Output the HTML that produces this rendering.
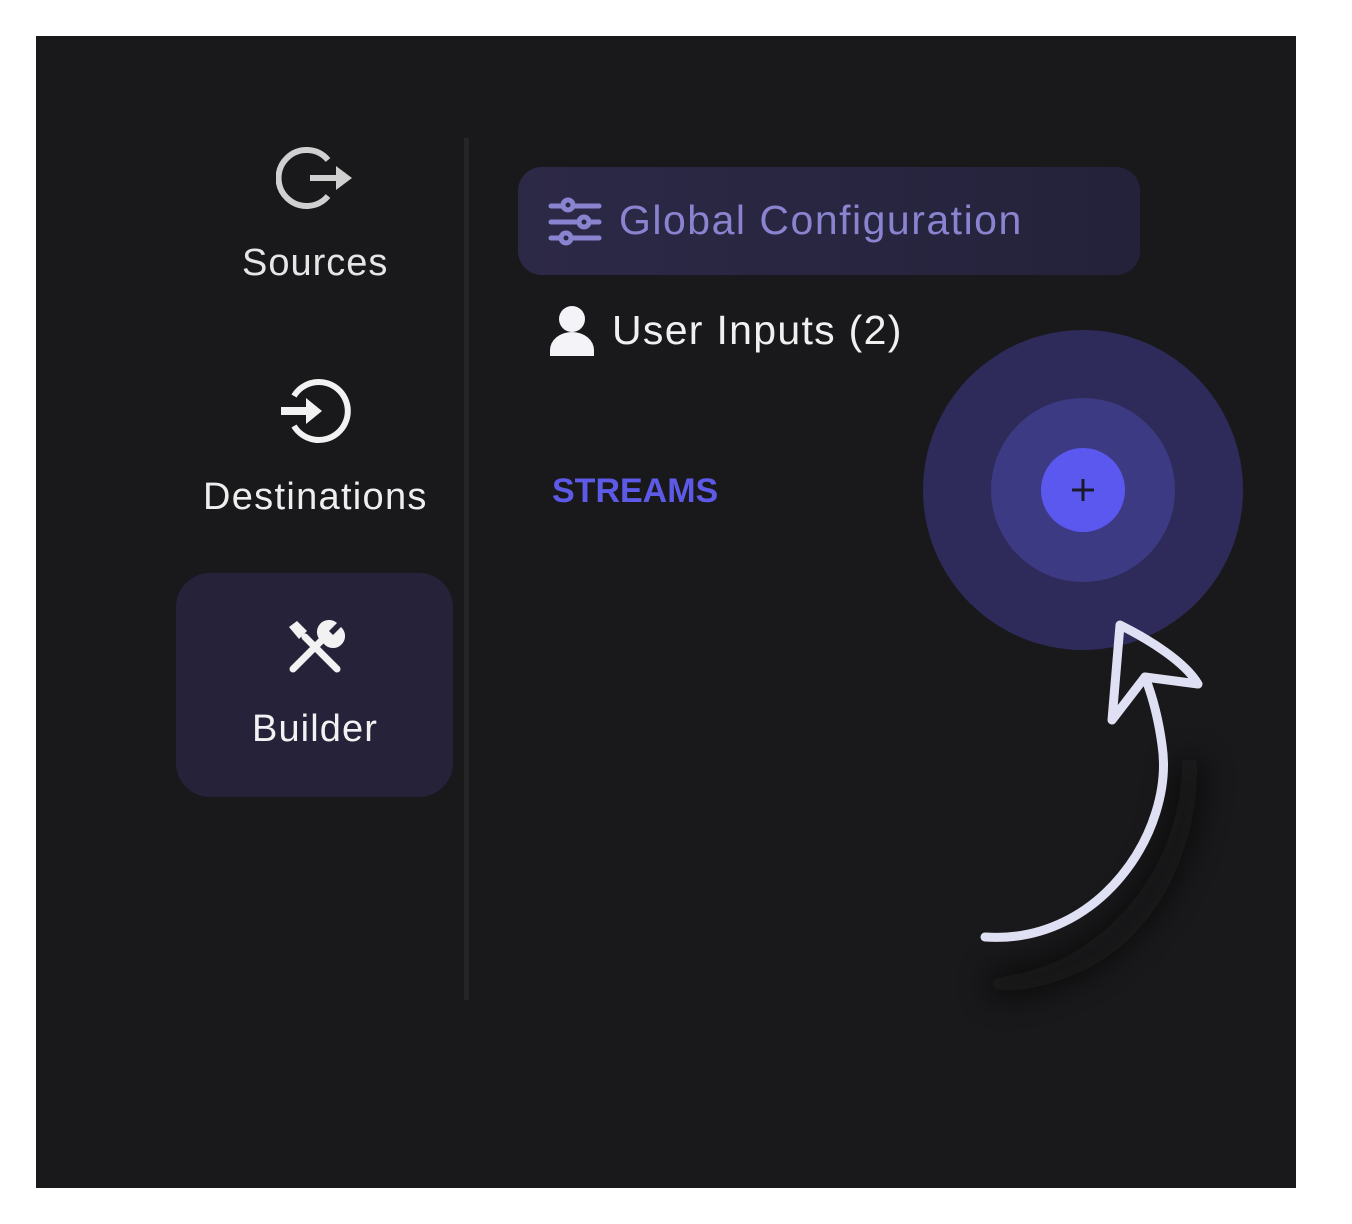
<!DOCTYPE html>
<html><head><style>
html,body{margin:0;padding:0;background:#fff;}
body{width:1352px;height:1224px;position:relative;overflow:hidden;font-family:"Liberation Sans",sans-serif;}
.panel{position:absolute;left:36px;top:36px;width:1260px;height:1152px;background:#19191b;}
.t{position:absolute;white-space:nowrap;}
</style></head><body>
<div class="panel"></div>
<div style="position:absolute;left:464px;top:138px;width:5px;height:862px;background:#252528;"></div>
<div style="position:absolute;left:176px;top:573px;width:277px;height:224px;border-radius:34px;background:#25223a;"></div>
<div style="position:absolute;left:518px;top:167px;width:622px;height:108px;border-radius:24px;background:linear-gradient(90deg,#2c2947,#24223a);"></div>

<svg style="position:absolute;left:276px;top:144px" width="80" height="70" viewBox="0 0 80 70">
<path d="M52 16 A28 28 0 1 0 52 52" fill="none" stroke="#d0d0d0" stroke-width="6"/>
<path d="M34 31 H60 V22 L76 34 L60 46 V37 H34 Z" fill="#d0d0d0"/>
</svg>
<div class="t" style="left:242px;top:242px;font-size:38px;color:#e6e6e6;letter-spacing:1px;">Sources</div>
<svg style="position:absolute;left:276px;top:376px" width="80" height="70" viewBox="0 0 80 70">
<path d="M18 20 A29 29 0 1 1 18 50" fill="none" stroke="#f2f2f2" stroke-width="6"/>
<path d="M5 31 H30 V22 L46 35 L30 48 V39 H5 Z" fill="#f2f2f2"/>
</svg>
<div class="t" style="left:203px;top:476px;font-size:38px;color:#eeeeee;letter-spacing:1.3px;">Destinations</div>
<svg style="position:absolute;left:285px;top:617px" width="60" height="60" viewBox="0 0 60 60">
<path d="M8 52 L36 24 M20 20 L52 52" stroke="#f2f2f2" stroke-width="7" stroke-linecap="round"/>
<path d="M4 10 L12 4 L22 14 L14 22 Z" fill="#f2f2f2"/>
<path d="M36 24 A12 12 0 0 1 52 6 L44 14 L48 18 L56 10 A12 12 0 0 1 40 28 Z" fill="#f2f2f2"/>
</svg>
<div class="t" style="left:252px;top:708px;font-size:38px;color:#f2f2f2;letter-spacing:1.1px;">Builder</div>

<svg style="position:absolute;left:548px;top:196px" width="54" height="52" viewBox="0 0 54 52">
<g stroke="#8a84d0" stroke-width="5" stroke-linecap="round" fill="#2a2745">
<line x1="3" y1="10" x2="51" y2="10"/><line x1="3" y1="26" x2="51" y2="26"/><line x1="3" y1="42" x2="51" y2="42"/>
<circle cx="20" cy="9" r="5"/><circle cx="36" cy="26" r="5"/><circle cx="18" cy="42" r="5"/>
</g></svg>
<div class="t" style="left:619px;top:197px;font-size:41px;color:#8a84d0;letter-spacing:1.5px;">Global Configuration</div>

<svg style="position:absolute;left:549px;top:304px" width="48" height="54" viewBox="0 0 48 54">
<circle cx="23" cy="15" r="13" fill="#f4f4f8"/>
<path d="M1 52 V46 A22 18 0 0 1 45 46 V52 Z" fill="#f4f4f8"/>
</svg>
<div class="t" style="left:612px;top:307px;font-size:41px;color:#f0f0f0;letter-spacing:1.3px;">User Inputs (2)</div>

<div class="t" style="left:552px;top:472px;font-size:34px;font-weight:bold;color:#5d5ae8;">STREAMS</div>

<div style="position:absolute;left:923px;top:330px;width:320px;height:320px;border-radius:50%;background:#2e2b5a;"></div>
<div style="position:absolute;left:991px;top:398px;width:184px;height:184px;border-radius:50%;background:#3d3a84;"></div>
<div style="position:absolute;left:1041px;top:448px;width:84px;height:84px;border-radius:50%;background:#5b58f0;"></div>
<svg style="position:absolute;left:1070px;top:477px" width="26" height="26"><path d="M13 2V24M2 13H24" stroke="#1a1a2a" stroke-width="3"/></svg>

<svg style="position:absolute;left:0;top:0" width="1352" height="1224">
<defs><filter id="b" x="-100%" y="-100%" width="300%" height="300%"><feGaussianBlur stdDeviation="16"/></filter></defs>
<path d="M990 985 C1110 980 1190 880 1190 760" stroke="#0a0a0b" stroke-width="24" fill="none" filter="url(#b)" opacity="0.7"/>
<path d="M985 937 C1100 945 1175 830 1162 745 C1158 715 1150 690 1145 677" stroke="#e0e0f4" stroke-width="9" fill="none" stroke-linecap="round"/>
<path d="M1145 677 L1198 684 C1185 662 1150 640 1120 625 L1112 720 Z" stroke="#e0e0f4" stroke-width="9" fill="none" stroke-linejoin="round" stroke-linecap="round"/>
</svg>
</body></html>
